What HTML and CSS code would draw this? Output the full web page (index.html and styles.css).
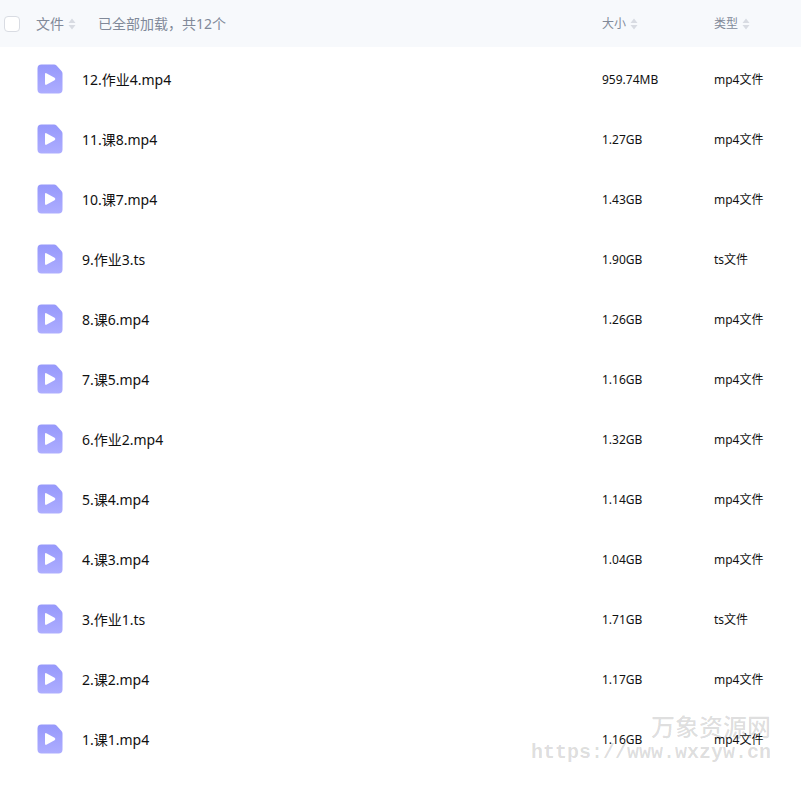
FILE: index.html
```html
<!DOCTYPE html>
<html lang="zh-CN">

<head>
    <meta charset="UTF-8">
    <meta name="viewport" content="width=device-width, initial-scale=1.0">
    <title>文件列表</title>
    <link rel="stylesheet" href="styles.css">
</head>

<body>
    <svg width="0" height="0" class="sprite" aria-hidden="true">
        <defs>
            <linearGradient id="fill" x1="0" y1="0" x2="0" y2="1">
                <stop offset="0" stop-color="#9698fb" />
                <stop offset="1" stop-color="#adadff" />
            </linearGradient>
            <symbol id="video" viewBox="0 0 26 30">
                <path fill="url(#fill)" d="M4.500 .5H17Q18.500 .5 19.500 1.500L24.500 7Q25.500 8 25.500 9.500V25.500a4 4 0 0 1-4 4H4.500a4 4 0 0 1-4-4V4.500a4 4 0 0 1 4-4z" />
                <path fill="#fff" d="M8 10.500Q8 8.500 9.800 9.400L17.600 13.700Q19.200 15 17.600 16.300L9.800 20.600Q8 21.500 8 19.500z" />
            </symbol>
            <symbol id="sort" viewBox="0 0 8 12">
                <path fill="#d8dbe2" d="M4 .5L7.500 5H.5zM4 11.500L.5 7H7.500z" />
            </symbol>
        </defs>
    </svg>

    <table class="files">
        <thead>
            <tr>
                <th class="check"><input type="checkbox" aria-label="全选"></th>
                <th class="name">
                    <div class="title">
                        <button type="button" class="sort">文件<svg><use href="#sort" /></svg></button>
                        <span>已全部加载，共12个</span>
                    </div>
                </th>
                <th class="size"><button type="button" class="sort">大小<svg><use href="#sort" /></svg></button></th>
                <th class="type"><button type="button" class="sort">类型<svg><use href="#sort" /></svg></button></th>
            </tr>
        </thead>
        <tbody>
            <tr>
                <td></td>
                <td><div class="file"><svg><use href="#video" /></svg>12.作业4.mp4</div></td>
                <td>959.74MB</td>
                <td>mp4文件</td>
            </tr>
            <tr>
                <td></td>
                <td><div class="file"><svg><use href="#video" /></svg>11.课8.mp4</div></td>
                <td>1.27GB</td>
                <td>mp4文件</td>
            </tr>
            <tr>
                <td></td>
                <td><div class="file"><svg><use href="#video" /></svg>10.课7.mp4</div></td>
                <td>1.43GB</td>
                <td>mp4文件</td>
            </tr>
            <tr>
                <td></td>
                <td><div class="file"><svg><use href="#video" /></svg>9.作业3.ts</div></td>
                <td>1.90GB</td>
                <td>ts文件</td>
            </tr>
            <tr>
                <td></td>
                <td><div class="file"><svg><use href="#video" /></svg>8.课6.mp4</div></td>
                <td>1.26GB</td>
                <td>mp4文件</td>
            </tr>
            <tr>
                <td></td>
                <td><div class="file"><svg><use href="#video" /></svg>7.课5.mp4</div></td>
                <td>1.16GB</td>
                <td>mp4文件</td>
            </tr>
            <tr>
                <td></td>
                <td><div class="file"><svg><use href="#video" /></svg>6.作业2.mp4</div></td>
                <td>1.32GB</td>
                <td>mp4文件</td>
            </tr>
            <tr>
                <td></td>
                <td><div class="file"><svg><use href="#video" /></svg>5.课4.mp4</div></td>
                <td>1.14GB</td>
                <td>mp4文件</td>
            </tr>
            <tr>
                <td></td>
                <td><div class="file"><svg><use href="#video" /></svg>4.课3.mp4</div></td>
                <td>1.04GB</td>
                <td>mp4文件</td>
            </tr>
            <tr>
                <td></td>
                <td><div class="file"><svg><use href="#video" /></svg>3.作业1.ts</div></td>
                <td>1.71GB</td>
                <td>ts文件</td>
            </tr>
            <tr>
                <td></td>
                <td><div class="file"><svg><use href="#video" /></svg>2.课2.mp4</div></td>
                <td>1.17GB</td>
                <td>mp4文件</td>
            </tr>
            <tr>
                <td></td>
                <td><div class="file"><svg><use href="#video" /></svg>1.课1.mp4</div></td>
                <td>1.16GB</td>
                <td>mp4文件</td>
            </tr>
        </tbody>
    </table>

    <div class="watermark">
        <p class="site">万象资源网</p>
        <p class="url">https://www.wxzyw.cn</p>
    </div>
</body>

</html>
```

FILE: styles.css
```css
* {
    margin: 0;
    padding: 0;
    box-sizing: border-box;
}

body {
    position: relative;
    min-height: 100vh;
    background-color: #fff;
    color: #111;
    font-family: "Noto Sans", "Noto Sans CJK SC", sans-serif;
    font-size: 12px;
    line-height: 20px;
}

.sprite {
    position: absolute;
}

/* 文件列表 */
.files {
    width: 100%;
    table-layout: fixed;
    border-collapse: collapse;
    text-align: left;
}

.files thead tr {
    height: 47px;
    background-color: #f7f9fc;
    color: #818999;
}

/* 表头与列表之间的间隔 */
.files tbody::before {
    content: '';
    display: block;
    height: 2px;
}

.files tbody tr {
    height: 60px;
}

.files td {
    padding-top: 2px;
}

.files th {
    font-weight: normal;
}

.files .check {
    width: 36px;
    padding-left: 4px;
}

.files .size {
    width: 112px;
}

.files .type {
    width: 87px;
}

/* 复选框 */
.check input {
    display: block;
    width: 16px;
    height: 16px;
    appearance: none;
    background-color: #fff;
    border: 1px solid #d9dce3;
    border-radius: 4px;
}

.title {
    display: flex;
    align-items: center;
    gap: 22px;
    font-size: 14px;
}

/* 排序按钮 */
.sort {
    display: flex;
    align-items: center;
    gap: 4px;
    border: none;
    background: none;
    color: inherit;
    font: inherit;
    cursor: pointer;
}

.sort svg {
    width: 8px;
    height: 12px;
}

/* 文件名 */
.file {
    display: flex;
    align-items: center;
    gap: 19px;
    padding-left: 1px;
    font-size: 14px;
}

.file svg {
    width: 26px;
    height: 30px;
    margin-bottom: 2px;
}

/* 水印 */
.watermark {
    position: absolute;
    right: 30px;
    bottom: 22px;
    color: rgba(0, 0, 0, .14);
    font-weight: bold;
    text-align: right;
    pointer-events: none;
}

.watermark .site {
    font-size: 24px;
    font-weight: 500;
    line-height: 28px;
}

.watermark .url {
    font-family: "Liberation Mono", monospace;
    font-size: 20px;
    line-height: 24px;
}
```
